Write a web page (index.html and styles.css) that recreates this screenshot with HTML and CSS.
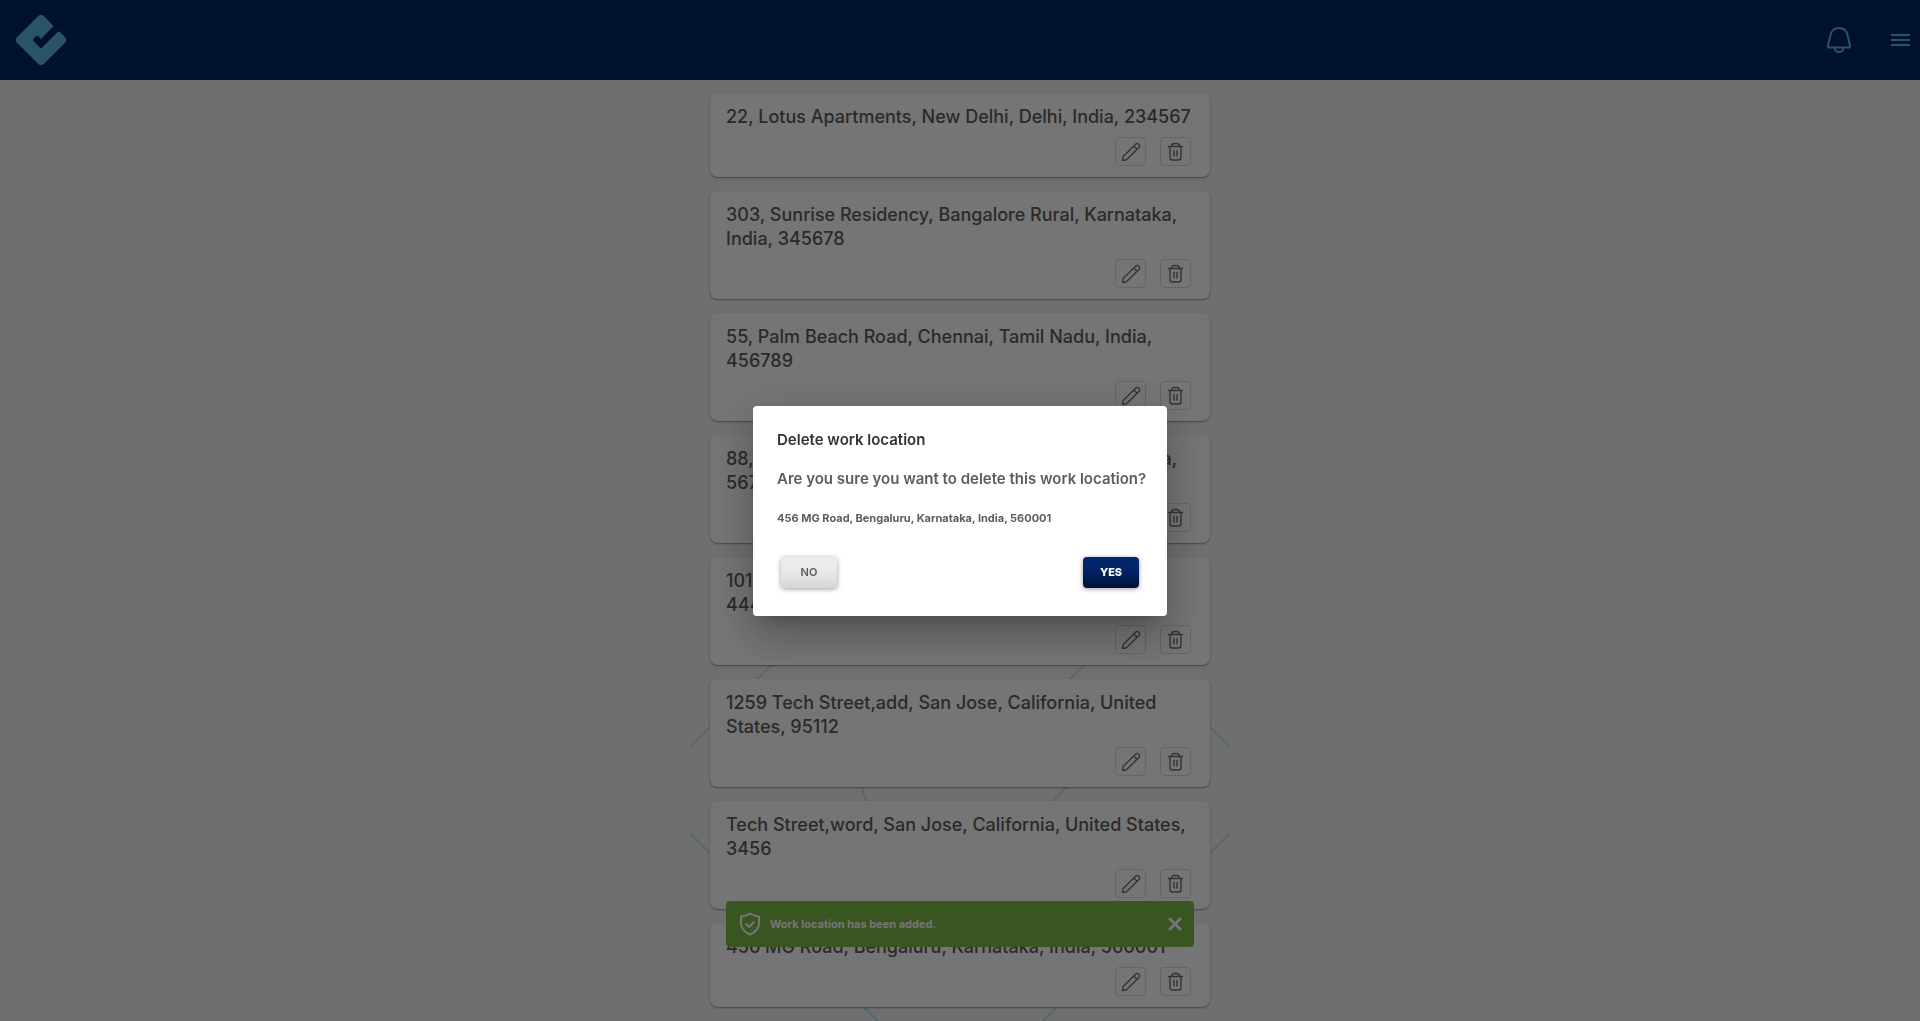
FILE: index.html
```html
<!DOCTYPE html>
<html lang="en">
<head>
<meta charset="utf-8">
<title>Work locations</title>
<link rel="stylesheet" href="styles.css">
</head>
<body>
<svg class="sprite" aria-hidden="true">
  <symbol id="pencil" viewBox="0 0 20 20"><path d="M1.500 18.500l.7-4L14.800 1.900a1.800 1.800 0 0 1 2.600 0l.7.7a1.800 1.800 0 0 1 0 2.600L5.500 17.800zM12.700 4l3.300 3.300"/></symbol>
  <symbol id="trash" viewBox="0 0 20 20"><path d="M2.500 4.500h14M4 4.500v11a2.500 2.500 0 0 0 2.500 2.500h6a2.500 2.500 0 0 0 2.500-2.500v-11M5.500 4.500c0-2 1.500-3 3-3h2c1.500 0 3 1 3 3M8 8.500v5.500M11 8.500v5.500"/></symbol>
</svg>
<header class="topbar">
  <a href="#" class="logo" aria-label="Home"><svg width="50" height="50" viewBox="0 0 50 50"><path d="M22 1.300a4.200 4.200 0 0 1 6 0L37.500 11 25 24l-2.500-2.500a2 2 0 0 0-2.800 0l-2 2a2 2 0 0 0 0 2.800l6 6a2 2 0 0 0 2.800 0L41 17.400a2.500 2.500 0 0 1 3.500 0L48.800 22a4.200 4.200 0 0 1 0 6L28 48.700a4.200 4.200 0 0 1-6 0L1.200 28a4.200 4.200 0 0 1 0-6z"/></svg></a>
  <nav class="tools">
    <button class="tool" aria-label="Notifications"><svg width="26" height="28" viewBox="0 0 26 28"><path d="M13 2C8 2 5 5.500 4.200 10L2 19.500c-.3 1.500.3 2 1.300 2h19.400c1 0 1.600-.5 1.300-2L21.800 10C21 5.500 18 2 13 2zM8.500 21.500a4.500 4.500 0 0 0 9 0"/></svg></button>
    <button class="tool" aria-label="Menu"><svg width="20" height="28" viewBox="0 0 20 28"><path d="M1 9h19M1 14h19M1 19h19"/></svg></button>
  </nav>
</header>
<main class="page">
  <svg class="watermark" width="540" height="381" viewBox="0 0 540 381" aria-hidden="true"><path d="M0 107L83 23M375 44L405 15M0 193l188 188M540 107l-30-30M540 193L353 381M355 169l30-30M173 145q-2 12 8 20"/></svg>
  <ul class="list">
    <li class="card"><p class="address">22, Lotus Apartments, New Delhi, Delhi, India, 234567</p></li>
    <li class="card"><p class="address">303, Sunrise Residency, Bangalore Rural, Karnataka, India, 345678</p></li>
    <li class="card"><p class="address">55, Palm Beach Road, Chennai, Tamil Nadu, India, 456789</p></li>
    <li class="card"><p class="address">88, Lakeview Gardens, Hyderabad, Telangana, India, 567890</p></li>
    <li class="card"><p class="address">101, Green Park Society, Pune, Maharashtra, India, 444001</p></li>
    <li class="card"><p class="address">1259 Tech Street,add, San Jose, California, United States, 95112</p></li>
    <li class="card"><p class="address">Tech Street,word, San Jose, California, United States, 3456</p></li>
    <li class="card"><p class="address">456 MG Road, Bengaluru, Karnataka, India, 560001</p></li>
  </ul>
</main>
<div class="toast" role="status">
  <svg width="24" height="24" viewBox="0 0 24 24"><path d="M12 1.500c3 2 5.500 2.500 9 3v7c0 5-3.500 8.500-9 11-5.500-2.500-9-6-9-11v-7c3.500-.5 6-1 9-3zM8 12l3 3 5-5"/></svg>
  <span class="toast-text">Work location has been added.</span>
  <button class="toast-close" aria-label="Close"><svg width="14" height="14" viewBox="0 0 14 14"><path d="M2 2l10 10M12 2L2 12"/></svg></button>
</div>
<div class="overlay">
  <section class="dialog" role="dialog" aria-modal="true" aria-labelledby="dialog-title">
    <h2 class="dialog-title" id="dialog-title">Delete work location</h2>
    <p class="question">Are you sure you want to delete this work location?</p>
    <p class="target">456 MG Road, Bengaluru, Karnataka, India, 560001</p>
    <div class="actions"><button class="btn">NO</button><button class="btn btn-primary">YES</button></div>
  </section>
</div>
<script src="app.js"></script>
</body>
</html>
```
FILE: app.js
```js
// Every work location gets the same edit and delete buttons.
document.querySelectorAll('.card').forEach(function (card) {
  card.insertAdjacentHTML('beforeend',
    '<div class="card-actions">' +
    '<button class="icon-btn" aria-label="Edit"><svg width="20" height="20"><use href="#pencil"/></svg></button>' +
    '<button class="icon-btn" aria-label="Delete"><svg width="20" height="20"><use href="#trash"/></svg></button>' +
    '</div>');
});
```
FILE: styles.css
```css
* { box-sizing: border-box; }
body { margin: 0; background: #f2f2f2; color: #5d5d5d; font-family: Inter, "Liberation Sans", sans-serif; height: 100vh; overflow: hidden; }
p, h2, ul { margin: 0; padding: 0; }
button { padding: 0; border: 0; background: none; font: inherit; cursor: pointer; }
svg { display: block; fill: none; stroke: currentColor; stroke-linecap: round; stroke-linejoin: round; }
.sprite { position: absolute; width: 0; height: 0; }
.topbar { display: flex; align-items: center; justify-content: space-between; height: 80px; padding: 0 10px 0 16px; background: #002664; color: #5db9de; }
.logo { color: inherit; }
.logo svg { fill: currentColor; stroke: none; }
.tools { display: flex; gap: 38px; }
.tool { color: inherit; }
.tool svg { stroke-width: 2; stroke-linecap: butt; }
.page { position: relative; max-width: 540px; margin: 0 auto; padding: 13px 20px; }
.watermark { position: absolute; left: 0; top: 560px; stroke: #bfe0ee; stroke-width: 2; }
.list { position: relative; display: grid; gap: 14px; list-style: none; }
.card { display: grid; gap: 8px; padding: 12px 12px 11px 16px; border-radius: 8px; background: #fff; box-shadow: 0 1px 2px rgba(0, 0, 0, .4); }
.address { font-size: 18px; line-height: 24px; font-weight: 500; }
.card-actions { display: flex; justify-content: flex-end; gap: 14px; padding-right: 7px; }
.icon-btn { display: grid; place-items: center; width: 31px; height: 29px; border: 1px solid #dcdcdc; border-radius: 4px; color: #707070; }
.icon-btn svg { stroke-width: 1.4; }
.toast { position: fixed; left: 50%; bottom: 74px; transform: translateX(-50%); display: flex; align-items: center; gap: 8px; width: 468px; height: 46px; padding: 0 12px; border-radius: 4px; background: #7ab94a; color: #fff; }
.toast svg { stroke-width: 2; }
.toast-text { flex: 1; font-size: 11px; line-height: 16px; font-weight: 700; }
.toast-close { color: inherit; }
.toast-close svg { stroke-width: 3; }
.overlay { position: fixed; inset: 0; display: grid; place-items: center; background: rgba(0, 0, 0, .54); }
.dialog { width: 414px; padding: 24px 20px 28px 24px; border-radius: 4px; background: #fff; color: #5d5d5d; box-shadow: 0 11px 15px -7px rgba(0, 0, 0, .2), 0 24px 38px 3px rgba(0, 0, 0, .14), 0 9px 46px 8px rgba(0, 0, 0, .12); }
.dialog-title { font-size: 15px; line-height: 20px; font-weight: 600; color: #333; }
.question { margin-top: 19px; font-size: 15px; line-height: 20px; font-weight: 600; }
.target { margin-top: 20px; font-size: 11px; line-height: 18px; font-weight: 700; }
.actions { display: flex; justify-content: space-between; margin-top: 30px; padding: 0 8px 0 4px; }
.btn { width: 56px; height: 31px; border-radius: 4px; background: linear-gradient(#eaecec 40%, #d6d6d6); box-shadow: 0 1px 5px rgba(0, 0, 0, .4); color: #5d5d5d; font-size: 11px; font-weight: 600; }
.btn-primary { background: linear-gradient(#002569 40%, #001236); color: #fff; font-weight: 800; }
```
